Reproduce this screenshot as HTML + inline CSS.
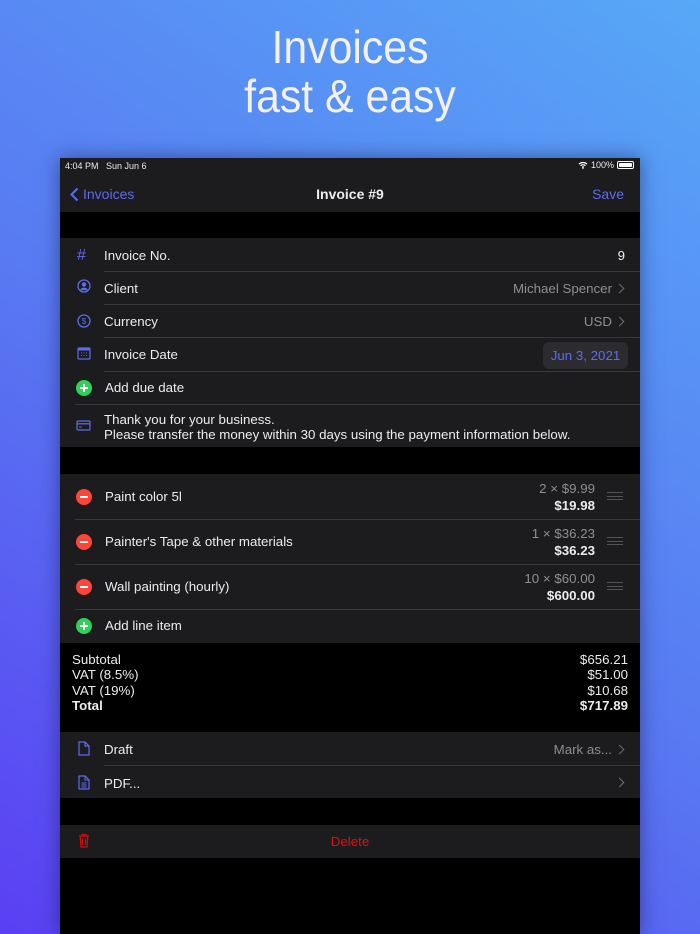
<!DOCTYPE html>
<html><head><meta charset="utf-8"><style>
*{margin:0;padding:0;box-sizing:border-box}
body{width:700px;height:934px;overflow:hidden;position:relative;font-family:"Liberation Sans",sans-serif;background:linear-gradient(35deg,#5a3ff3 0%,#5877f2 45%,#57a8f7 100%)}
.title{position:absolute;top:23px;left:0;width:700px;text-align:center;color:#f5f0ea;font-size:46px;line-height:49px;font-family:"Liberation Sans",sans-serif;transform:scaleX(0.93);transform-origin:350px 0}
.scr{position:absolute;left:60px;top:158px;width:580px;height:776px;background:#000;box-shadow:0 0 18px rgba(20,20,60,.5);overflow:hidden;color:#ececee;font-size:13.3px}
.a{position:absolute}
.bg{background:#1c1c1e}
.sep{position:absolute;height:1px;background:#38383a;right:0}
.blue{color:#5b6cf0}
.gray{color:#8e8e93}
.chev{position:absolute;width:7px;height:7px;border-right:1.6px solid #6b6b70;border-top:1.6px solid #6b6b70;transform:rotate(45deg)}
.minus{position:absolute;left:16px;width:16px;height:16px;border-radius:50%;background:#ff453a}
.minus:after{content:"";position:absolute;left:4px;top:7px;width:8px;height:2px;background:#fff}
.plus{position:absolute;left:16px;width:16px;height:16px;border-radius:50%;background:#30d158}
.plus:after{content:"";position:absolute;left:4px;top:7px;width:8px;height:2px;background:#fff}
.plus:before{content:"";position:absolute;left:7px;top:4px;width:2px;height:8px;background:#fff}
.hb{position:absolute;right:17px;width:16px;height:8px;border-top:1px solid #555;border-bottom:1px solid #555}
.hb:after{content:"";position:absolute;left:0;right:0;top:3px;height:1px;background:#555}
.r{text-align:right}
</style></head><body>
<div class="title">Invoices<br>fast &amp; easy</div>
<div class="scr">
 <div class="a bg" style="left:0;top:0;width:580px;height:54px"></div>
 <div class="a" style="left:5px;top:3px;font-size:9px">4:04 PM&nbsp;&nbsp;&nbsp;Sun Jun 6</div>
 <div class="a" style="right:6px;top:2px;font-size:9px;display:flex;align-items:center;gap:3px">
  <svg width="10" height="8" viewBox="0 0 10 8"><path d="M1 3a6 6 0 0 1 8 0M2.5 4.6a4 4 0 0 1 5 0M4 6.2a2 2 0 0 1 2 0" stroke="#fff" stroke-width="1.2" fill="none"/><circle cx="5" cy="7.3" r=".7" fill="#fff"/></svg>100%
  <span style="display:inline-block;width:17px;height:8px;border:1px solid #fff;border-radius:2px;padding:1px"><span style="display:block;width:100%;height:100%;background:#fff;border-radius:1px"></span></span>
 </div>
 <div class="a blue" style="left:10px;top:28px;font-size:14px;display:flex;align-items:center;gap:4px"><svg width="9" height="15" viewBox="0 0 9 15"><path d="M7.5 1.5 1.5 7.5l6 6" stroke="#5b6cf0" stroke-width="2" fill="none"/></svg>Invoices</div>
 <div class="a" style="left:0;width:580px;top:28px;text-align:center;font-size:14px;font-weight:bold">Invoice #9</div>
 <div class="a blue" style="right:16px;top:28px;font-size:14px">Save</div>

 <div class="a bg" style="left:0;top:80px;width:580px;height:209px"></div>
 <div class="a blue" style="left:17px;top:89px;font-size:16px">#</div>
 <div class="a" style="left:44px;top:90px">Invoice No.</div><div class="a" style="right:15px;top:90px">9</div>
 <div class="sep" style="left:44px;top:113px"></div>
 <svg class="a" style="left:17px;top:121px" width="14" height="14" viewBox="0 0 14 14"><circle cx="7" cy="7" r="6" stroke="#5b6cf0" stroke-width="1.3" fill="none"/><circle cx="7" cy="5.5" r="2.2" fill="#5b6cf0"/><path d="M3 11.2c1-2 2.4-2.6 4-2.6s3 .6 4 2.6" fill="#5b6cf0"/></svg>
 <div class="a" style="left:44px;top:123px">Client</div><div class="a gray" style="right:28px;top:123px">Michael Spencer</div><div class="chev" style="right:17px;top:127px"></div>
 <div class="sep" style="left:44px;top:146px"></div>
 <svg class="a" style="left:17px;top:156px" width="14" height="14" viewBox="0 0 14 14"><circle cx="7" cy="7" r="6" stroke="#5b6cf0" stroke-width="1.3" fill="none"/><text x="7" y="10" font-size="8" fill="#5b6cf0" text-anchor="middle" font-family="Liberation Sans">$</text></svg>
 <div class="a" style="left:44px;top:156px">Currency</div><div class="a gray" style="right:28px;top:156px">USD</div><div class="chev" style="right:17px;top:160px"></div>
 <div class="sep" style="left:44px;top:179px"></div>
 <svg class="a" style="left:17px;top:189px" width="14" height="13" viewBox="0 0 14 13"><rect x="1" y="1" width="12" height="11" rx="1" stroke="#5b6cf0" stroke-width="1.2" fill="none"/><rect x="1" y="1" width="12" height="2.5" fill="#5b6cf0"/><path d="M4 6h1M6.5 6h1M9 6h1M4 8.5h1M6.5 8.5h1M9 8.5h1" stroke="#5b6cf0"/></svg>
 <div class="a" style="left:44px;top:189px">Invoice Date</div>
 <div class="a blue" style="right:12px;top:184px;width:85px;height:27px;background:#2c2c30;border-radius:6px;text-align:center;line-height:27px">Jun 3, 2021</div>
 <div class="sep" style="left:44px;top:213px"></div>
 <div class="plus" style="top:222px"></div>
 <div class="a" style="left:45px;top:222px">Add due date</div>
 <div class="sep" style="left:15px;top:246px"></div>
 <svg class="a" style="left:16px;top:262px" width="15" height="11" viewBox="0 0 15 11"><rect x="1" y="1" width="13" height="9" rx="1" stroke="#5b6cf0" stroke-width="1.2" fill="none"/><path d="M1 3.8h13" stroke="#5b6cf0" stroke-width="1.2"/><path d="M3 7h3" stroke="#5b6cf0"/></svg>
 <div class="a" style="left:44px;top:254px;line-height:15px">Thank you for your business.<br>Please transfer the money within 30 days using the payment information below.</div>

 <div class="a bg" style="left:0;top:316px;width:580px;height:169px"></div>
 <div class="minus" style="top:331px"></div><div class="a" style="left:45px;top:331px">Paint color 5l</div>
 <div class="a gray r" style="right:45px;top:323px">2 × $9.99</div><div class="a r" style="right:45px;top:340px;font-weight:bold">$19.98</div><div class="hb" style="top:334px"></div>
 <div class="sep" style="left:15px;top:361px"></div>
 <div class="minus" style="top:376px"></div><div class="a" style="left:45px;top:376px">Painter's Tape &amp; other materials</div>
 <div class="a gray r" style="right:45px;top:368px">1 × $36.23</div><div class="a r" style="right:45px;top:385px;font-weight:bold">$36.23</div><div class="hb" style="top:379px"></div>
 <div class="sep" style="left:15px;top:406px"></div>
 <div class="minus" style="top:421px"></div><div class="a" style="left:45px;top:421px">Wall painting (hourly)</div>
 <div class="a gray r" style="right:45px;top:413px">10 × $60.00</div><div class="a r" style="right:45px;top:430px;font-weight:bold">$600.00</div><div class="hb" style="top:424px"></div>
 <div class="sep" style="left:15px;top:451px"></div>
 <div class="plus" style="top:460px"></div><div class="a" style="left:45px;top:460px">Add line item</div>

 <div class="a" style="left:12px;top:494px;line-height:15.3px">Subtotal<br>VAT (8.5%)<br>VAT (19%)<br><b>Total</b></div>
 <div class="a r" style="right:12px;top:494px;line-height:15.3px">$656.21<br>$51.00<br>$10.68<br><b>$717.89</b></div>

 <div class="a bg" style="left:0;top:574px;width:580px;height:66px"></div>
 <svg class="a" style="left:18px;top:583px" width="12" height="15" viewBox="0 0 12 15"><path d="M1 1h6l4 4v9H1z" stroke="#5b6cf0" stroke-width="1.2" fill="none"/><path d="M7 1v4h4" stroke="#5b6cf0" stroke-width="1.2" fill="none"/></svg>
 <div class="a" style="left:44px;top:584px">Draft</div><div class="a gray" style="right:28px;top:584px">Mark as...</div><div class="chev" style="right:17px;top:588px"></div>
 <div class="sep" style="left:44px;top:607px"></div>
 <svg class="a" style="left:18px;top:617px" width="12" height="15" viewBox="0 0 12 15"><path d="M1 1h6l4 4v9H1z" stroke="#5b6cf0" stroke-width="1.2" fill="none"/><path d="M7 1v4h4M3.5 8h5M3.5 10h5M3.5 12h5" stroke="#5b6cf0" fill="none"/></svg>
 <div class="a" style="left:44px;top:618px">PDF...</div><div class="chev" style="right:17px;top:621px"></div>

 <div class="a bg" style="left:0;top:667px;width:580px;height:33px"></div>
 <svg class="a" style="left:18px;top:675px" width="12" height="15" viewBox="0 0 12 15"><path d="M1 3h10M4 3V1.5h4V3M2.2 3.5l.8 10.5h6l.8-10.5M4.5 5.5v6.5M7.5 5.5v6.5" stroke="#d60b0b" stroke-width="1.2" fill="none"/></svg>
 <div class="a" style="left:0;width:580px;top:676px;text-align:center;color:#e0110f">Delete</div>
</div>
</body></html>
